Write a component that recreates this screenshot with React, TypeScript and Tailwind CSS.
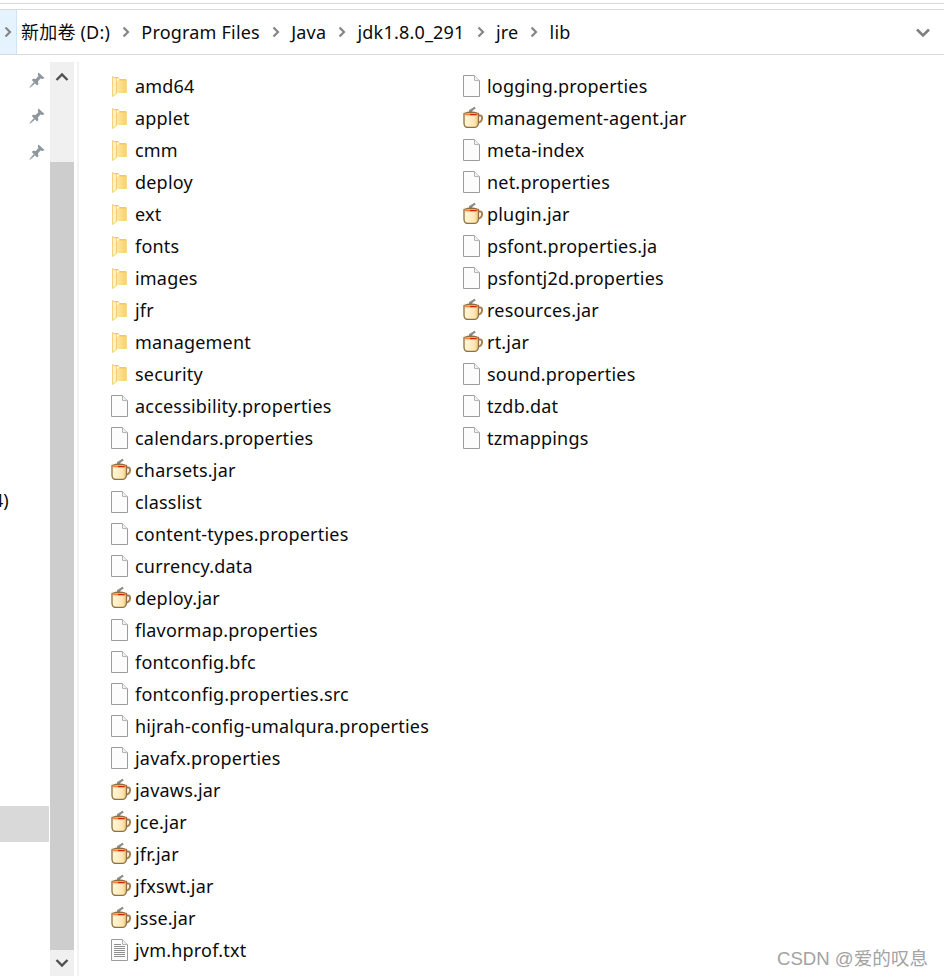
const LEFT_COLUMN: [string, string][] = [
  ["folder", "amd64"],
  ["folder", "applet"],
  ["folder", "cmm"],
  ["folder", "deploy"],
  ["folder", "ext"],
  ["folder", "fonts"],
  ["folder", "images"],
  ["folder", "jfr"],
  ["folder", "management"],
  ["folder", "security"],
  ["file", "accessibility.properties"],
  ["file", "calendars.properties"],
  ["jar", "charsets.jar"],
  ["file", "classlist"],
  ["file", "content-types.properties"],
  ["file", "currency.data"],
  ["jar", "deploy.jar"],
  ["file", "flavormap.properties"],
  ["file", "fontconfig.bfc"],
  ["file", "fontconfig.properties.src"],
  ["file", "hijrah-config-umalqura.properties"],
  ["file", "javafx.properties"],
  ["jar", "javaws.jar"],
  ["jar", "jce.jar"],
  ["jar", "jfr.jar"],
  ["jar", "jfxswt.jar"],
  ["jar", "jsse.jar"],
  ["text", "jvm.hprof.txt"],
];

const RIGHT_COLUMN: [string, string][] = [
  ["file", "logging.properties"],
  ["jar", "management-agent.jar"],
  ["file", "meta-index"],
  ["file", "net.properties"],
  ["jar", "plugin.jar"],
  ["file", "psfont.properties.ja"],
  ["file", "psfontj2d.properties"],
  ["jar", "resources.jar"],
  ["jar", "rt.jar"],
  ["file", "sound.properties"],
  ["file", "tzdb.dat"],
  ["file", "tzmappings"],
];

const CRUMBS = ["Program Files", "Java", "jdk1.8.0_291", "jre", "lib"];

function Chevron() {
  return (
    <svg width="8" height="12" viewBox="0 0 8 12" className="shrink-0">
      <path d="M1.5 1.5 L6 6 L1.5 10.5" fill="none" stroke="#858585" strokeWidth="2.2" />
    </svg>
  );
}

function Pin() {
  return (
    <svg width="18" height="18" viewBox="0 0 18 18">
      <path
        d="M10.5 1.5 L16.5 7 L14.8 8 L12.5 7.6 L10 10.6 L10.4 13.2 L9 14.5 L3.8 9 L5 7.8 L7.6 8 L10.3 5.3 L9.8 3 Z M5.6 11.2 L7 12.6 L2 16.8 L1.4 16.2 Z"
        fill="#8f979e"
      />
    </svg>
  );
}

function FolderIcon() {
  return (
    <svg width="15" height="21" viewBox="0 0 15 21" className="ml-px">
      <defs>
        <linearGradient id="folder-body" x1="0" y1="0" x2="1" y2="0">
          <stop offset="0" stopColor="#fde9a8" />
          <stop offset="1" stopColor="#f8d169" />
        </linearGradient>
      </defs>
      <path d="M1 1 H6 L7 2.5 V17 H14.5 V4 Q14.5 3 13.5 3 H7 Z" fill="#f3c755" />
      <path d="M4 4.5 H14.5 V17 H4 Z" fill="url(#folder-body)" />
      <path d="M0.5 0.5 L4.5 2.5 V17.5 L0.5 20.5 Z" fill="#fdf1c4" stroke="#efc860" strokeWidth="0.8" />
    </svg>
  );
}

function FileIcon({ lined }: { lined?: boolean }) {
  return (
    <svg width="17" height="22" viewBox="0 0 17 22">
      <path d="M0.5 0.5 H11.5 L16.5 5.5 V21.5 H0.5 Z" fill="#fcfcfc" stroke="#9c9c9c" />
      <path d="M11.5 0.5 V5.5 H16.5" fill="#efefef" stroke="#b5b5b5" />
      {lined && (
        <path
          d="M3 5.5 H10 M3 7.5 H14 M3 9.5 H14 M3 11.5 H14 M3 13.5 H14 M3 15.5 H14 M3 17.5 H14"
          stroke="#8e8e8e"
          strokeWidth="1"
        />
      )}
    </svg>
  );
}

function JarIcon() {
  return (
    <svg width="20" height="22" viewBox="0 0 20 22" className="-mt-0.5">
      <defs>
        <linearGradient id="jar-body" x1="0" y1="0" x2="1" y2="0">
          <stop offset="0" stopColor="#fff7dc" />
          <stop offset="0.7" stopColor="#fde9b4" />
          <stop offset="1" stopColor="#e9c47e" />
        </linearGradient>
      </defs>
      <path d="M6 6 Q5.5 3.5 8 3 L11.5 0.8 L12.8 2.2 L10 4.2 Q9 5 9.3 6 Z" fill="#8a8a8a" />
      <path d="M15 9.5 H17 Q19.3 9.5 19 12.5 Q18.6 16.5 14 17" fill="none" stroke="#a5814a" strokeWidth="2" />
      <path d="M1 7.5 Q8 5 15.5 7.5 V17 Q15 21.5 11 21.5 H5 Q1 21.5 1 17 Z" fill="url(#jar-body)" stroke="#8f6f3f" strokeWidth="1.3" />
      <path d="M2 8 Q8 6.4 14.8 8 L14.4 9.6 Q8 8.8 2.4 9.6 Z" fill="#f08a2c" />
      <path d="M7 8 H13.5 V9.2 H7 Z" fill="#dd1f1f" />
    </svg>
  );
}

function RowIcon({ kind }: { kind: string }) {
  if (kind === "folder") return <FolderIcon />;
  if (kind === "jar") return <JarIcon />;
  return <FileIcon lined={kind === "text"} />;
}

function FileColumn({ items }: { items: [string, string][] }) {
  return (
    <div className="flex flex-col">
      {items.map(([kind, name]) => (
        <div key={name} className="flex h-8 items-center">
          <span className="flex w-6 shrink-0 justify-start">
            <RowIcon kind={kind} />
          </span>
          <span className="whitespace-nowrap tracking-[0.2px]">{name}</span>
        </div>
      ))}
    </div>
  );
}

export default function App() {
  return (
    <div className="relative flex h-[977px] w-[944px] flex-col overflow-hidden bg-white text-[18px] text-[#0b0b0b] [font-family:'Noto_Sans','Noto_Sans_CJK_SC',sans-serif]">
      <div className="mt-[3px] h-[7px] shrink-0 border-y border-[#d9d9d9]" />
      <div className="flex h-[45px] shrink-0 items-center border-b border-[#d9d9d9] pr-[14px]">
        <div className="flex h-full w-[17px] shrink-0 items-center justify-center border-r border-[#cce4f7] bg-[#e5f3ff]">
          <Chevron />
        </div>
        <span className="ml-1 whitespace-nowrap tracking-[0.2px]">新加卷 (D:)</span>
        {CRUMBS.map((crumb) => (
          <div key={crumb} className="flex items-center">
            <span className="mr-[11.25px] ml-3">
              <Chevron />
            </span>
            <span className="whitespace-nowrap tracking-[0.2px]">{crumb}</span>
          </div>
        ))}
        <svg width="14" height="10" viewBox="0 0 14 10" className="mt-0.5 ml-auto">
          <path d="M1 1.5 L7 7.5 L13 1.5" fill="none" stroke="#808080" strokeWidth="2.6" />
        </svg>
      </div>

      <div className="flex min-h-0 flex-1 pt-[7px]">
        <div className="flex w-[50px] shrink-0 flex-col">
          <div className="flex flex-col items-end gap-[18px] pt-[9px] pr-1">
            <Pin />
            <Pin />
            <Pin />
          </div>
          <span className="mt-[327px] -ml-[7px] h-6 whitespace-nowrap leading-6">4)</span>
          <div className="mt-[294px] h-9 w-[49px] bg-[#d9d9d9]" />
        </div>

        <div className="flex h-[914px] w-6 shrink-0 flex-col bg-[#f0f0f0]">
          <div className="flex h-[100px] justify-center pt-[10px]">
            <svg width="14" height="10" viewBox="0 0 14 10">
              <path d="M1.5 8 L7 2.5 L12.5 8" fill="none" stroke="#505050" strokeWidth="2.4" />
            </svg>
          </div>
          <div className="h-[788px] bg-[#cdcdcd]" />
          <div className="flex flex-1 items-center justify-center">
            <svg width="14" height="10" viewBox="0 0 14 10">
              <path d="M1.5 2 L7 7.5 L12.5 2" fill="none" stroke="#505050" strokeWidth="2.4" />
            </svg>
          </div>
        </div>

        <div className="ml-[3px] h-[914px] w-[2px] shrink-0 bg-[#f2f2f2]" />

        <div className="grid grid-cols-[352px_1fr] pt-2 pl-[32px]">
          <FileColumn items={LEFT_COLUMN} />
          <FileColumn items={RIGHT_COLUMN} />
        </div>
      </div>

      <span className="absolute top-[945px] left-[777px] whitespace-nowrap text-[18.6px] text-[#a3a3a3] [font-family:'Liberation_Sans','Noto_Sans_CJK_SC',sans-serif]">
        CSDN @爱的叹息
      </span>
    </div>
  );
}
